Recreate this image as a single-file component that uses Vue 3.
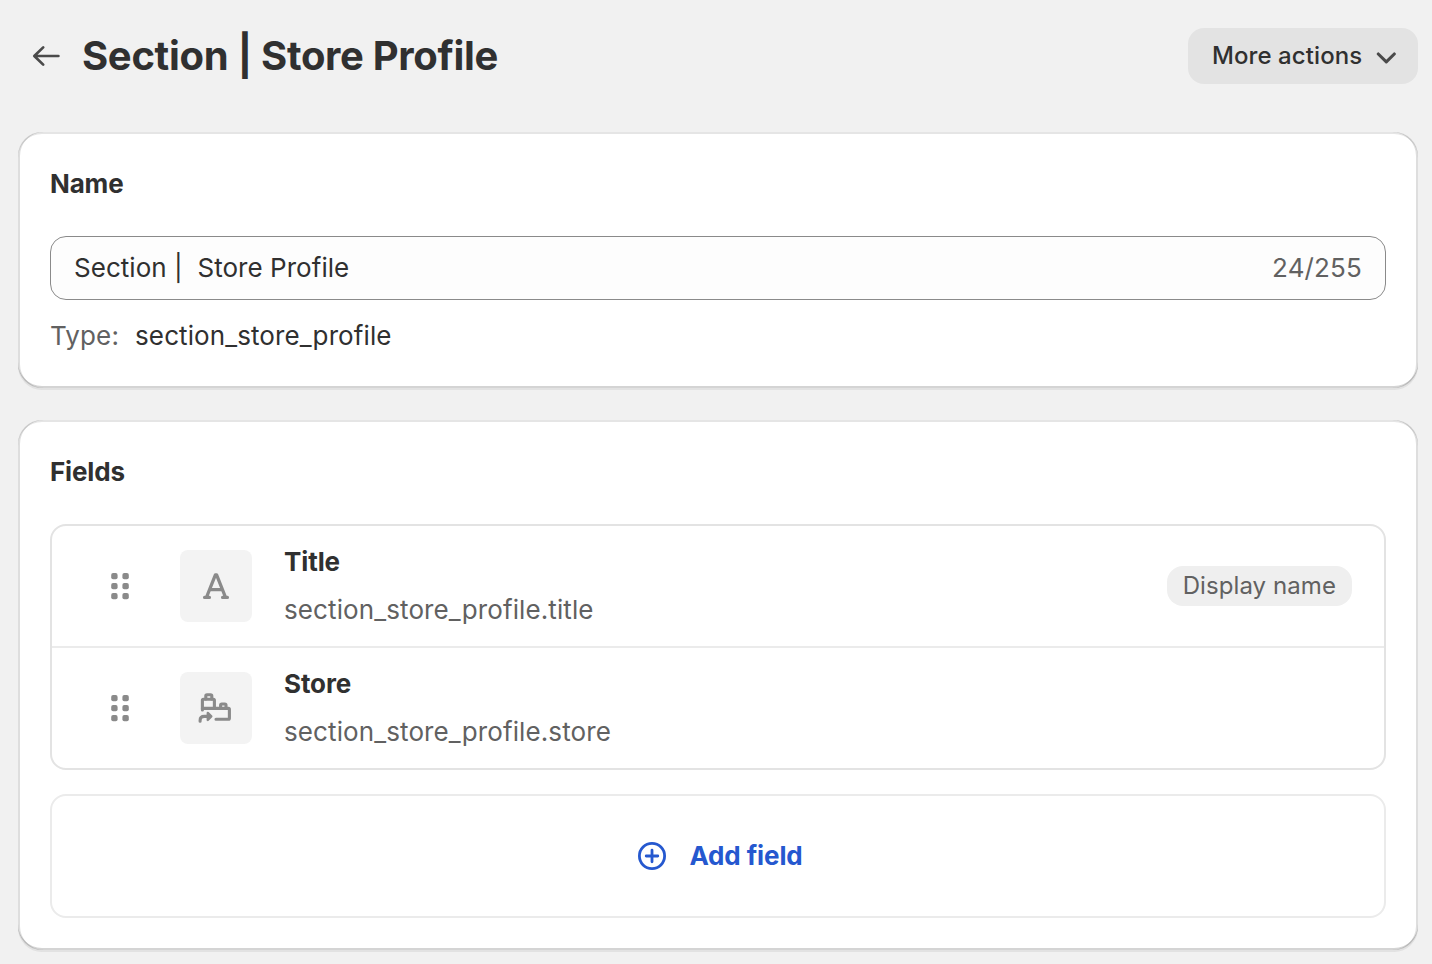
<script setup>
const name = 'Section |  Store Profile'
const fields = [
  { title: 'Title', key: 'section_store_profile.title', icon: 'text', badge: 'Display name' },
  { title: 'Store', key: 'section_store_profile.store', icon: 'reference' },
]
const dots = [13, 23, 33].flatMap((y) => [11.2, 22.4].map((x) => ({ x, y })))
</script>

<template>
  <main class="page">
    <header class="header">
      <svg class="back" viewBox="0 0 40 40" fill="none">
        <path d="M32.4 20H8.6M17.2 11.4L8.3 20l8.9 8.6" stroke="#4a4a4a" stroke-width="2.7" stroke-linecap="round" stroke-linejoin="round" />
      </svg>
      <h1>Section | Store Profile</h1>
      <button class="more" type="button">
        <span>More actions</span>
        <svg viewBox="0 0 20 12" fill="none">
          <path d="M2.3 2l8 7.8L18.3 2" stroke="#4a4a4a" stroke-width="3.1" stroke-linecap="round" stroke-linejoin="round" />
        </svg>
      </button>
    </header>

    <section class="card name-card">
      <h2>Name</h2>
      <div class="input">
        <span class="value">{{ name }}</span>
        <span class="count">24/255</span>
      </div>
      <p class="type"><span class="label">Type:</span><span class="handle">section_store_profile</span></p>
    </section>

    <section class="card fields-card">
      <h2>Fields</h2>
      <div class="list">
        <div v-for="f in fields" :key="f.title" class="row">
          <svg class="drag" viewBox="0 0 40 46">
            <rect v-for="(d, i) in dots" :key="i" :x="d.x" :y="d.y - 3" width="6.4" height="6.2" rx="1.9" fill="#8a8a8a" />
          </svg>
          <div class="tile">
            <svg v-if="f.icon === 'text'" viewBox="0 0 40 40" fill="none" stroke="#8a8a8a" stroke-width="3.3" stroke-linecap="round" stroke-linejoin="round">
              <path d="M10.6 31L19.4 8.9h1.2L29.4 31M14 23.7h12M8.6 31.4h4.8M26.6 31.4h4.8" />
            </svg>
            <svg v-else viewBox="0 0 40 40" fill="none" stroke="#8a8a8a" stroke-width="3.1" stroke-linecap="round" stroke-linejoin="round">
              <path d="M6.4 22V12.3q0-1 1-1h10q1 0 1 1v8" />
              <path d="M9.8 11V8q0-1.2 1.2-1.2h3.6q1.2 0 1.2 1.2v3" />
              <path d="M6.4 20.4h26q1 0 1 1v8.8q0 1-1 1H20" />
              <path d="M24.6 20v-2.8q0-1.2 1.2-1.2h3q1.2 0 1.2 1.2V20" />
              <path d="M4.1 33.2v-.8q0-4 4.2-4h3.4" />
              <path d="M11.8 24.9l3.5 3.5-3.5 3.5z" fill="#8a8a8a" stroke-width="2.4" />
            </svg>
          </div>
          <div class="info">
            <strong>{{ f.title }}</strong>
            <span>{{ f.key }}</span>
          </div>
          <span v-if="f.badge" class="badge">{{ f.badge }}</span>
        </div>
      </div>
      <button class="add" type="button">
        <svg viewBox="0 0 28 28" fill="none" stroke="#2558cf" stroke-width="2.8" stroke-linecap="round">
          <circle cx="14" cy="14" r="12.6" />
          <path d="M14 8.2v11.6M8.2 14h11.6" />
        </svg>
        <span>Add field</span>
      </button>
    </section>
  </main>
</template>

<style>
body {
  background: #f1f1f1;
}
</style>

<style scoped>
.page {
  box-sizing: border-box;
  height: 964px;
  overflow: hidden;
  padding: 28px 14px 0 18px;
  background: #f1f1f1;
  color: #303030;
  font-family: Inter, "Liberation Sans", sans-serif;
  font-size: 26px;
  line-height: 40px;
}
.header {
  display: flex;
  align-items: center;
  height: 56px;
  margin-bottom: 48px;
  padding-left: 8px;
}
.back {
  width: 40px;
  height: 40px;
  margin-right: 16px;
}
h1,
h2,
p {
  margin: 0;
}
h1 {
  flex: 1;
  font-size: 40px;
  font-weight: 650;
  line-height: 48px;
  letter-spacing: -0.32px;
}
h2 {
  font-size: 26px;
  font-weight: 650;
  line-height: 40px;
  letter-spacing: -0.15px;
}
button {
  font: inherit;
  color: inherit;
  border: 0;
}
.more {
  box-sizing: border-box;
  display: flex;
  align-items: center;
  justify-content: space-between;
  width: 230px;
  height: 56px;
  padding: 0 22px 0 24px;
  border-radius: 16px;
  background: #e3e3e3;
  font-size: 24px;
  font-weight: 550;
  letter-spacing: 0.08px;
}
.more svg {
  width: 20px;
  height: 12px;
  margin-top: 4px;
}
.card {
  box-sizing: border-box;
  width: 1400px;
  padding: 32px;
  border-radius: 24px;
  background: #fff;
  box-shadow:
    0 2px 0 rgba(26, 26, 26, 0.07),
    inset 2px 0 0 rgba(0, 0, 0, 0.13),
    inset -2px 0 0 rgba(0, 0, 0, 0.13),
    inset 0 -2px 0 rgba(0, 0, 0, 0.17),
    inset 0 2px 0 rgba(204, 204, 204, 0.5);
}
.name-card {
  height: 256px;
  margin-bottom: 32px;
}
.input {
  box-sizing: border-box;
  display: flex;
  align-items: center;
  justify-content: space-between;
  height: 64px;
  margin: 32px 0 16px;
  padding: 0 23px;
  border: 1px solid #8a8a8a;
  border-radius: 16px;
  background: #fdfdfd;
}
.value {
  white-space: pre;
  letter-spacing: 0.04px;
}
.count,
.label {
  color: #616161;
  letter-spacing: 0.14px;
}
.type {
  display: flex;
  gap: 16px;
}
.handle {
  letter-spacing: 0.1px;
}
.fields-card {
  height: 530px;
}
.list {
  box-sizing: border-box;
  height: 246px;
  margin-top: 32px;
  border: 2px solid #e3e3e3;
  border-radius: 16px;
}
.row {
  box-sizing: border-box;
  display: flex;
  align-items: center;
  height: 120px;
  padding: 0 32px 0 48px;
}
.row + .row {
  height: 122px;
  border-top: 2px solid #ebebeb;
}
.drag {
  width: 40px;
  height: 46px;
  margin-right: 40px;
}
.tile {
  display: flex;
  align-items: center;
  justify-content: center;
  width: 72px;
  height: 72px;
  margin-right: 32px;
  border-radius: 8px;
  background: #f3f3f3;
}
.tile svg {
  width: 40px;
  height: 40px;
}
.info {
  flex: 1;
  display: flex;
  flex-direction: column;
  gap: 8px;
}
.info strong {
  font-weight: 650;
  letter-spacing: -0.12px;
}
.info span {
  color: #616161;
  letter-spacing: 0.11px;
}
.badge {
  height: 40px;
  padding: 0 16px;
  border-radius: 16px;
  background: #efefef;
  color: #616161;
  font-size: 24px;
  letter-spacing: 0.08px;
}
.add {
  box-sizing: border-box;
  display: flex;
  align-items: center;
  justify-content: center;
  gap: 23px;
  width: 100%;
  height: 124px;
  margin-top: 24px;
  padding: 0 0 0 5px;
  border: 2px solid #ebebeb;
  border-radius: 16px;
  background: #fff;
  color: #2558cf;
  font-weight: 650;
  letter-spacing: -0.12px;
}
.add svg {
  width: 28px;
  height: 28px;
}
</style>
